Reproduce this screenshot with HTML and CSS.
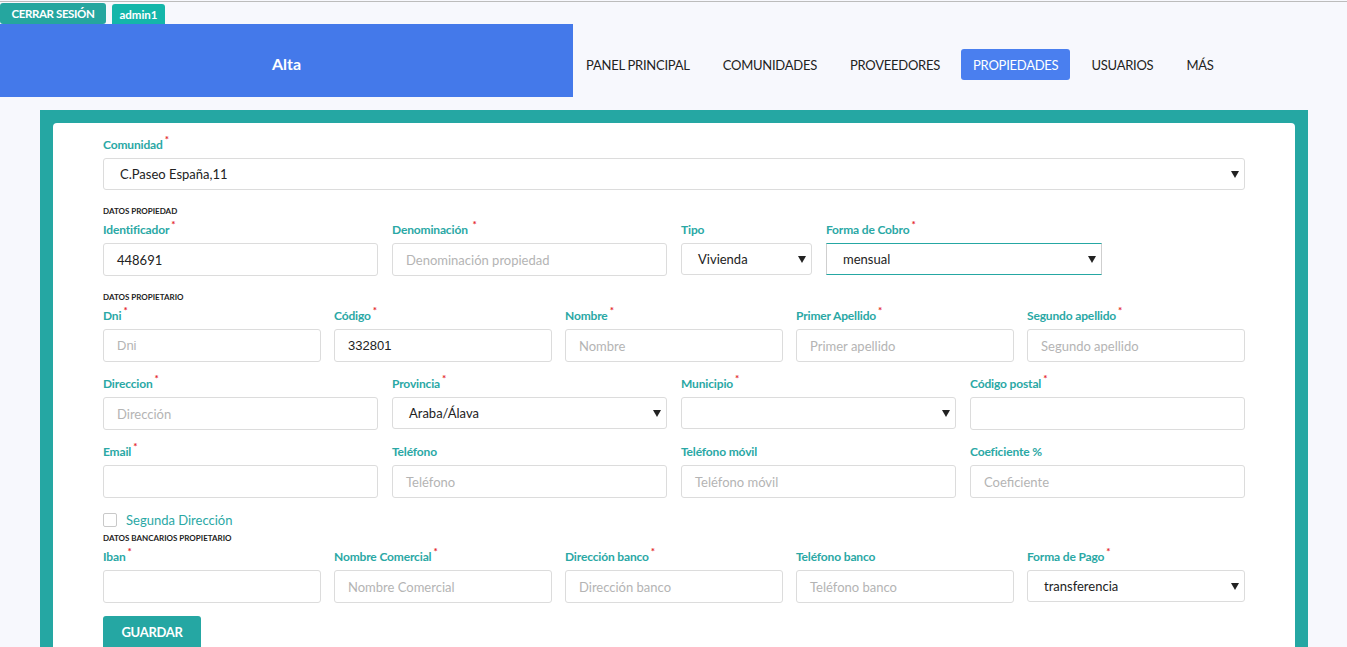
FILE: index.html
```html
<!DOCTYPE html>
<html lang="es">
<head>
<meta charset="utf-8">
<title>Alta propiedad</title>
<link rel="stylesheet" href="styles.css">
</head>
<body>
<div class="topline"></div>
<div class="tabs">
  <a class="tab tab-logout" href="#">CERRAR SESIÓN</a>
  <span class="tab tab-user">admin1</span>
</div>
<header class="header">
  <div class="brand">Alta</div>
  <nav class="nav">
    <a class="nav-item" href="#">PANEL PRINCIPAL</a>
    <a class="nav-item" href="#">COMUNIDADES</a>
    <a class="nav-item" href="#">PROVEEDORES</a>
    <a class="nav-item active" href="#">PROPIEDADES</a>
    <a class="nav-item" href="#">USUARIOS</a>
    <a class="nav-item" href="#">MÁS</a>
  </nav>
</header>

<main class="frame">
  <form class="card">
    <div class="field">
      <label class="label">Comunidad<sup class="req">*</sup></label>
      <div class="select"><span>C.Paseo España,11</span><svg class="caret" viewBox="0 0 8 7"><path d="M0 0h8L4 7z"/></svg></div>
    </div>

    <div class="section">DATOS PROPIEDAD</div>
    <div class="row row-prop">
      <div class="field">
        <label class="label">Identificador<sup class="req">*</sup></label>
        <div class="input">448691</div>
      </div>
      <div class="field">
        <label class="label">Denominación <sup class="req">*</sup></label>
        <div class="input ph">Denominación propiedad</div>
      </div>
      <div class="field">
        <label class="label">Tipo</label>
        <div class="select"><span>Vivienda</span><svg class="caret" viewBox="0 0 8 7"><path d="M0 0h8L4 7z"/></svg></div>
      </div>
      <div class="field">
        <label class="label">Forma de Cobro<sup class="req">*</sup></label>
        <div class="select focused"><span>mensual</span><svg class="caret" viewBox="0 0 8 7"><path d="M0 0h8L4 7z"/></svg></div>
      </div>
    </div>

    <div class="section">DATOS PROPIETARIO</div>
    <div class="row row-5">
      <div class="field">
        <label class="label">Dni<sup class="req">*</sup></label>
        <div class="input ph arial">Dni</div>
      </div>
      <div class="field">
        <label class="label">Código<sup class="req">*</sup></label>
        <div class="input arial">332801</div>
      </div>
      <div class="field">
        <label class="label">Nombre<sup class="req">*</sup></label>
        <div class="input ph">Nombre</div>
      </div>
      <div class="field">
        <label class="label">Primer Apellido<sup class="req">*</sup></label>
        <div class="input ph">Primer apellido</div>
      </div>
      <div class="field">
        <label class="label">Segundo apellido<sup class="req">*</sup></label>
        <div class="input ph">Segundo apellido</div>
      </div>
    </div>

    <div class="row row-4 gap-row">
      <div class="field">
        <label class="label">Direccion<sup class="req">*</sup></label>
        <div class="input ph">Dirección</div>
      </div>
      <div class="field">
        <label class="label">Provincia<sup class="req">*</sup></label>
        <div class="select"><span>Araba/Álava</span><svg class="caret" viewBox="0 0 8 7"><path d="M0 0h8L4 7z"/></svg></div>
      </div>
      <div class="field">
        <label class="label">Municipio<sup class="req">*</sup></label>
        <div class="select"><span></span><svg class="caret" viewBox="0 0 8 7"><path d="M0 0h8L4 7z"/></svg></div>
      </div>
      <div class="field">
        <label class="label">Código postal<sup class="req">*</sup></label>
        <div class="input"></div>
      </div>
    </div>

    <div class="row row-4 gap-row">
      <div class="field">
        <label class="label">Email<sup class="req">*</sup></label>
        <div class="input"></div>
      </div>
      <div class="field">
        <label class="label">Teléfono</label>
        <div class="input ph">Teléfono</div>
      </div>
      <div class="field">
        <label class="label">Teléfono móvil</label>
        <div class="input ph">Teléfono móvil</div>
      </div>
      <div class="field">
        <label class="label">Coeficiente %</label>
        <div class="input ph">Coeficiente</div>
      </div>
    </div>

    <div class="check">
      <span class="box"></span>
      <span class="check-text">Segunda Dirección</span>
    </div>

    <div class="section section-tight">DATOS BANCARIOS PROPIETARIO</div>
    <div class="row row-5">
      <div class="field">
        <label class="label">Iban<sup class="req">*</sup></label>
        <div class="input"></div>
      </div>
      <div class="field">
        <label class="label">Nombre Comercial<sup class="req">*</sup></label>
        <div class="input ph">Nombre Comercial</div>
      </div>
      <div class="field">
        <label class="label">Dirección banco<sup class="req">*</sup></label>
        <div class="input ph">Dirección banco</div>
      </div>
      <div class="field">
        <label class="label">Teléfono banco</label>
        <div class="input ph">Teléfono banco</div>
      </div>
      <div class="field">
        <label class="label">Forma de Pago<sup class="req">*</sup></label>
        <div class="select"><span>transferencia</span><svg class="caret" viewBox="0 0 8 7"><path d="M0 0h8L4 7z"/></svg></div>
      </div>
    </div>

    <div class="actions">
      <button class="btn" type="button">GUARDAR</button>
    </div>
  </form>
</main>
</body>
</html>
```

FILE: styles.css
```css
* { box-sizing: border-box; }

html, body {
  margin: 0;
  padding: 0;
}

body {
  background: #f7f8fd;
  font-family: Lato, "Open Sans", sans-serif;
  color: #222;
  height: 647px;
  overflow: hidden;
}

.topline {
  margin-top: 1px;
  height: 1px;
  background: #bcbcbc;
}

.tabs {
  display: flex;
  align-items: flex-end;
  gap: 6px;
  height: 22px;
}

.tab {
  display: flex;
  align-items: center;
  justify-content: center;
  color: #fff;
  font-weight: 700;
  font-size: 11px;
  text-decoration: none;
  border-radius: 3px 3px 0 0;
}

.tab-logout {
  width: 106px;
  height: 21px;
  background: #25a69f;
  font-size: 11.5px;
  letter-spacing: -0.4px;
  border-radius: 3px;
  padding-bottom: 1px;
}

.tab-user {
  width: 53px;
  height: 20px;
  background: #14b6aa;
  font-size: 11.5px;
}

.header {
  display: flex;
  height: 73px;
}

.brand {
  width: 573px;
  background: #4479ea;
  color: #fff;
  font-weight: 700;
  font-size: 16px;
  display: flex;
  align-items: center;
  justify-content: center;
  padding-top: 6px;
}

.nav {
  display: flex;
  align-items: center;
  gap: 9px;
  padding-left: 1px;
  padding-top: 8px;
}

.nav-item {
  display: flex;
  align-items: center;
  height: 31px;
  padding: 0 12px;
  font-size: 13px;
  letter-spacing: -0.25px;
  color: #222;
  text-decoration: none;
  border-radius: 3px;
}

.nav-item.active {
  background: #4a7fef;
  color: #fff;
}

.frame {
  margin: 13px 39px 0 40px;
  background: #25a7a3;
  padding: 13px 13px 0;
  height: 600px;
}

.card {
  background: #fff;
  border-radius: 4px 4px 0 0;
  height: 100%;
  padding: 13px 50px 0;
}

.field {
  display: flex;
  flex-direction: column;
  min-width: 0;
}

.label {
  font-size: 12px;
  font-weight: 700;
  letter-spacing: -0.15px;
  color: #2aa8a5;
  line-height: 18px;
  height: 18px;
  margin-bottom: 4px;
  white-space: nowrap;
}

.req {
  color: #e4262c;
  font-size: 10px;
  line-height: 0;
  margin-left: 2px;
  position: relative;
  top: -1px;
}

.input,
.select {
  height: 33px;
  border: 1px solid #dcdcdc;
  border-radius: 3px;
  font-size: 13px;
  color: #222;
  display: flex;
  align-items: center;
  padding: 0 13px;
  white-space: nowrap;
  overflow: hidden;
}

.select {
  height: 32px;
  justify-content: space-between;
  padding: 0 5px 0 16px;
}

.select.focused {
  border-radius: 0;
  border-color: #cfcfcf;
  border-top-color: #25a7a3;
  border-bottom-color: #25a7a3;
}

.caret {
  width: 8px;
  height: 7px;
  fill: #222;
  flex: none;
}

.ph {
  color: #b4b4b4;
}

.arial {
  font-family: "Liberation Sans", Arial, sans-serif;
}

.section {
  font-size: 8px;
  font-weight: 700;
  line-height: 10px;
  color: #222;
  margin-top: 16px;
  margin-bottom: 5px;
}

.section-tight {
  margin-top: 3px;
}

.row {
  display: grid;
  column-gap: 13px;
}

.row-prop {
  grid-template-columns: 275px 275px 131px 276px;
  column-gap: 14px;
}

.row-4 {
  grid-template-columns: repeat(4, 1fr);
  column-gap: 14px;
}

.row-5 {
  grid-template-columns: repeat(5, 1fr);
}

.gap-row {
  margin-top: 13px;
}

.check {
  display: flex;
  align-items: center;
  gap: 9px;
  height: 20px;
  margin-top: 12px;
}

.box {
  width: 14px;
  height: 14px;
  border: 1px solid #c9c9c9;
  border-radius: 2px;
  background: #fff;
}

.check-text {
  font-size: 13px;
  color: #2aa8a5;
}

.actions {
  margin-top: 13px;
}

.btn {
  width: 98px;
  height: 32px;
  border: 0;
  border-radius: 3px 3px 0 0;
  background: #25a7a3;
  color: #fff;
  font-family: Lato, sans-serif;
  font-weight: 700;
  font-size: 13px;
  letter-spacing: -0.3px;
}
```
